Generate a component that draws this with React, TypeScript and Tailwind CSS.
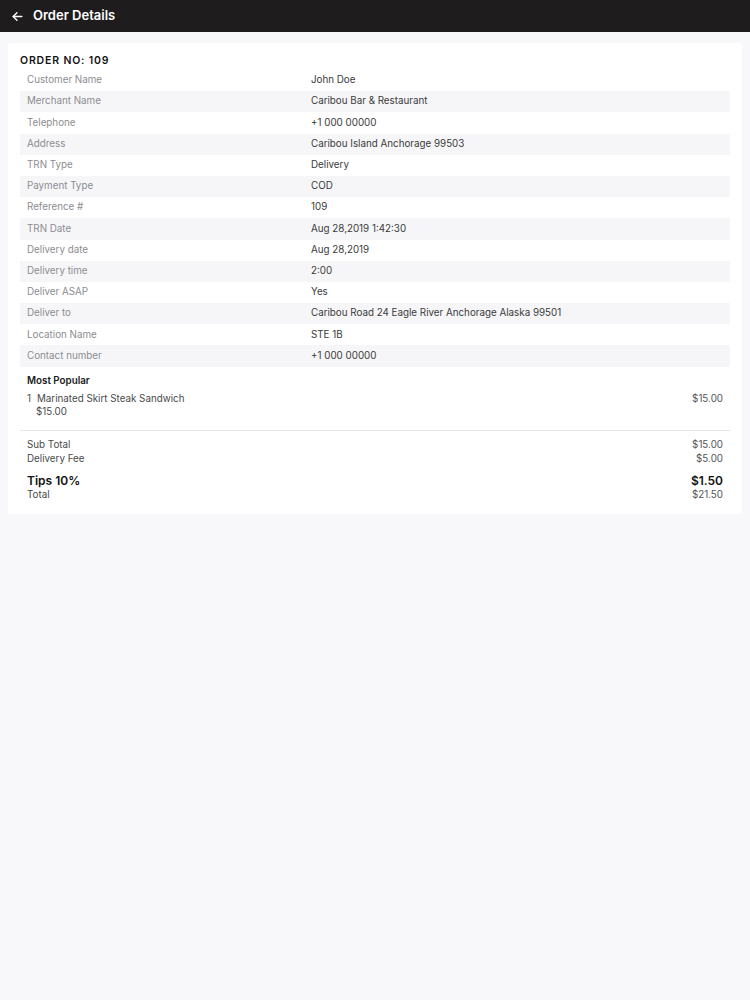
import React from "react";

const rows: [string, string][] = [
  ["Customer Name", "John Doe"],
  ["Merchant Name", "Caribou Bar & Restaurant"],
  ["Telephone", "+1 000 00000"],
  ["Address", "Caribou Island Anchorage 99503"],
  ["TRN Type", "Delivery"],
  ["Payment Type", "COD"],
  ["Reference #", "109"],
  ["TRN Date", "Aug 28,2019 1:42:30"],
  ["Delivery date", "Aug 28,2019"],
  ["Delivery time", "2:00"],
  ["Deliver ASAP", "Yes"],
  ["Deliver to", "Caribou Road 24 Eagle River Anchorage Alaska 99501"],
  ["Location Name", "STE 1B"],
  ["Contact number", "+1 000 00000"],
];

export default function App() {
  return (
    <div
      className="min-h-[1000px] w-full bg-[#f8f7fa]"
      style={{ fontFamily: "Inter, 'Noto Sans', sans-serif" }}
    >
      <div className="flex h-[32px] items-center bg-[#1e1c1d] pl-[11px]">
        <svg width="13" height="13" viewBox="0 0 24 24" fill="none" stroke="white" strokeWidth="2.6" strokeLinecap="round" strokeLinejoin="round">
          <path d="M20 12H4" />
          <path d="M11 5l-7 7 7 7" />
        </svg>
        <span className="ml-[9px] text-[13px] font-semibold text-white">Order Details</span>
      </div>
      <div className="px-[8px] pt-[11px]">
        <div className="rounded-[3px] bg-white px-[12px] pb-[13px] pt-[11px]">
          <div className="text-[10.5px] font-semibold tracking-[0.08em] text-[#141414] leading-[14px]">
            ORDER NO: 109
          </div>
          <div className="mt-[2px]">
            {rows.map(([k, v], i) => (
              <div
                key={k}
                className={`flex h-[21.2px] items-center text-[9.8px] ${i % 2 === 1 ? "bg-[#f6f6f8]" : ""}`}
              >
                <div className="w-[291px] pl-[7px] text-[#8c8c90]">{k}</div>
                <div className="text-[#3a3a3a]">{v}</div>
              </div>
            ))}
          </div>
          <div className="px-[7px] pt-[8px]">
            <div className="text-[9.8px] font-semibold leading-[12px] text-[#1a1a1a]">Most Popular</div>
            <div className="mt-[6px] flex justify-between text-[9.8px] leading-[12px] text-[#4a4a4a]">
              <div>
                <span>1</span>
                <span className="ml-[6px]">Marinated Skirt Steak Sandwich</span>
              </div>
              <span className="text-[#555]">$15.00</span>
            </div>
            <div className="ml-[9px] mt-[1px] text-[9.8px] leading-[12px] text-[#4a4a4a]">$15.00</div>
          </div>
          <div className="mt-[12px] h-px bg-[#e6e6e8]" />
          <div className="px-[7px] pt-[7px] text-[9.8px] leading-[14px] text-[#4a4a4a]">
            <div className="flex justify-between">
              <span>Sub Total</span>
              <span className="text-[#555]">$15.00</span>
            </div>
            <div className="flex justify-between">
              <span>Delivery Fee</span>
              <span className="text-[#555]">$5.00</span>
            </div>
            <div className="mt-[7px] flex justify-between text-[12px] font-semibold leading-[15px] text-[#111]">
              <span>Tips 10%</span>
              <span>$1.50</span>
            </div>
            <div className="flex justify-between leading-[13px]">
              <span>Total</span>
              <span className="text-[#555]">$21.50</span>
            </div>
          </div>
        </div>
      </div>
    </div>
  );
}
